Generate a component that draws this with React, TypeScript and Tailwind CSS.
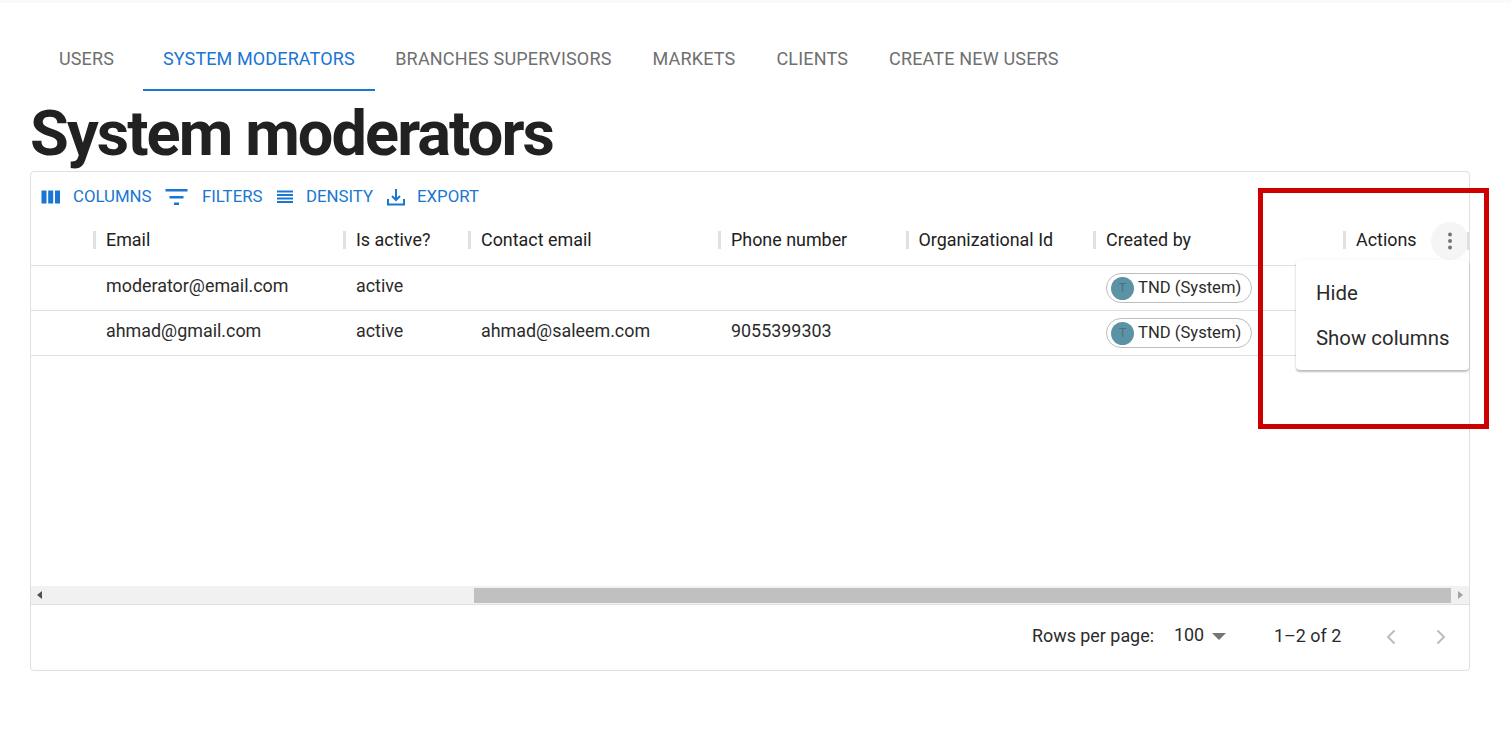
import React from 'react';
import { ChevronLeft, ChevronRight } from 'lucide-react';

const tabs = ['USERS', 'SYSTEM MODERATORS', 'BRANCHES SUPERVISORS', 'MARKETS', 'CLIENTS', 'CREATE NEW USERS'];

const columns = [
    { label: 'Email', width: 'w-[250px]' },
    { label: 'Is active?', width: 'w-[125px]' },
    { label: 'Contact email', width: 'w-[250px]' },
    { label: 'Phone number', width: 'w-[187.5px]' },
    { label: 'Organizational Id', width: 'w-[187.5px]' },
    { label: 'Created by', width: 'w-[250px]' },
];

const rows = [
    { email: 'moderator@email.com', active: 'active', contact: '', phone: '' },
    { email: 'ahmad@gmail.com', active: 'active', contact: 'ahmad@saleem.com', phone: '9055399303' },
];

const Chip = () => (
    <div className="flex h-[30px] w-[146px] items-center rounded-full border border-[#bdbdbd] pl-[4px]">
        <div className="flex h-[23px] w-[23px] items-center justify-center rounded-full bg-[#5a93a5] text-[12px] text-[#4f6f7b]">T</div>
        <span className="ml-[4px] text-[16.6px] text-[#2b2b2b]">TND (System)</span>
    </div>
);

const ToolbarButton: React.FC<{ icon: React.ReactNode; label: string; gap: string; className: string }> = ({ icon, label, gap, className }) => (
    <div className={`flex items-center ${gap} ${className}`}>
        {icon}
        <span className="text-[16.8px] text-[#1976d2]">{label}</span>
    </div>
);

const App: React.FC = () => {
    return (
        <div className="relative h-[752px] w-[1511px] overflow-hidden bg-white font-['Roboto',sans-serif]">
            <div className="h-[3px] bg-[#fafafa]" />

            {/* Tabs */}
            <div className="mt-[25px] flex h-[63px] pl-[30px]">
                {tabs.map((tab, i) => (
                    <div
                        key={tab}
                        className={`flex items-center justify-center border-b-2 text-[18px] ${i === 0 ? 'w-[113px] tracking-[0.12px]' : i === 1 ? 'px-[20px] tracking-[0.12px]' : 'px-[20.5px] tracking-[0.17px]'} ${i === 1 ? 'border-[#1976d2] text-[#1976d2]' : 'border-transparent text-[#6f6f6f]'}`}
                    >
                        {tab}
                    </div>
                ))}
            </div>

            <h1 className="ml-[30px] mt-[5px] h-[75px] text-[63px] font-bold leading-[76px] tracking-[-1.9px] text-[#212121]">System moderators</h1>

            {/* Grid */}
            <div className="relative ml-[30px] h-[500px] w-[1440px] rounded-[4px] border border-[#e0e0e0]">
                <div className="flex h-[46px] items-center pl-[10px] pt-[4px]">
                    <ToolbarButton
                        label="COLUMNS"
                        gap="gap-[12px]"
                        className="w-[124px]"
                        icon={
                            <svg width="20" height="14" viewBox="0 0 20 14" className="fill-[#1976d2]">
                                <rect x="0.5" y="0.5" width="5" height="13" />
                                <rect x="7.2" y="0.5" width="5" height="13" />
                                <rect x="14" y="0.5" width="5" height="13" />
                            </svg>
                        }
                    />
                    <ToolbarButton
                        label="FILTERS"
                        gap="gap-[13px]"
                        className="w-[112px]"
                        icon={
                            <svg width="24" height="18" viewBox="0 0 24 18" className="fill-[#1976d2]">
                                <rect x="0.5" y="1" width="22" height="2.5" />
                                <rect x="4.5" y="8" width="14" height="2.5" />
                                <rect x="9" y="14.5" width="5" height="2.5" />
                            </svg>
                        }
                    />
                    <ToolbarButton
                        label="DENSITY"
                        gap="gap-[13px]"
                        className="w-[110px]"
                        icon={
                            <svg width="16" height="14" viewBox="0 0 16 14" className="fill-[#1976d2]">
                                <rect x="0" y="0.5" width="16" height="2" />
                                <rect x="0" y="4" width="16" height="2" />
                                <rect x="0" y="7.5" width="16" height="2" />
                                <rect x="0" y="11" width="16" height="2" />
                            </svg>
                        }
                    />
                    <ToolbarButton
                        label="EXPORT"
                        gap="gap-[12px]"
                        className=""
                        icon={
                            <svg width="18" height="18" viewBox="0 0 18 18" fill="none" stroke="#1976d2" strokeWidth="2">
                                <path d="M1 11v5.5h16V11" />
                                <path d="M9 1v10" />
                                <path d="M5 8l4 4 4-4" />
                            </svg>
                        }
                    />
                </div>

                {/* Header */}
                <div className="flex h-[48px] items-center border-b border-[#e0e0e0] pb-[2px] pl-[62px] text-[17.9px] text-[#212121]">
                    {columns.map(col => (
                        <div key={col.label} className={`flex items-center ${col.width}`}>
                            <div className="mr-[10px] h-[18px] w-[3px] bg-[#e0e0e0]" />
                            {col.label}
                        </div>
                    ))}
                    <div className="flex w-[88px] items-center">
                        <div className="mr-[10px] h-[18px] w-[3px] bg-[#e0e0e0]" />
                        Actions
                    </div>
                    <div className="flex h-[38px] w-[38px] items-center justify-center rounded-full bg-[#f5f5f5]">
                        <svg width="6" height="18" viewBox="0 0 6 18" className="fill-[#757575]">
                            <circle cx="3" cy="2.5" r="2" />
                            <circle cx="3" cy="9" r="2" />
                            <circle cx="3" cy="15.5" r="2" />
                        </svg>
                    </div>
                    <div className="-ml-[2px] h-[18px] w-[2px] bg-[#e0e0e0]" />
                </div>

                {/* Rows */}
                {rows.map(row => (
                    <div key={row.email} className="flex h-[45px] items-center border-b border-[#e0e0e0] pl-[75px] text-[17.9px] text-[#2b2b2b]">
                        <div className="-mt-[3px] w-[250px]">{row.email}</div>
                        <div className="-mt-[3px] w-[125px]">{row.active}</div>
                        <div className="-mt-[3px] w-[250px]">{row.contact}</div>
                        <div className="-mt-[3px] w-[187.5px]">{row.phone}</div>
                        <div className="w-[187.5px]" />
                        <Chip />
                    </div>
                ))}

                <div className="h-[230px]" />

                {/* Scrollbar */}
                <div className="flex h-[19px] items-center border-b border-[#e0e0e0] bg-[#f1f1f1]">
                    <div className="flex w-[17px] justify-center">
                        <div className="h-0 w-0 border-y-[4px] border-r-[5px] border-y-transparent border-r-[#505050]" />
                    </div>
                    <div className="ml-[426px] h-[15px] w-[977px] bg-[#c0c0c0]" />
                    <div className="flex flex-1 justify-center">
                        <div className="h-0 w-0 border-y-[4px] border-l-[5px] border-y-transparent border-l-[#a3a3a3]" />
                    </div>
                </div>

                {/* Footer */}
                <div className="flex h-[65px] items-center pr-[16px] text-[17.9px] text-[#2b2b2b]">
                    <div className="-mt-[3px] ml-auto">Rows per page:</div>
                    <div className="ml-[20px] flex w-[100px] items-center">
                        <span className="-mt-[5px]">100</span>
                        <div className="ml-[8px] -mt-[1px] h-0 w-0 border-x-[7px] border-t-[7px] border-x-transparent border-t-[#757575]" />
                    </div>
                    <div className="-mt-[3px] w-[105px]">1–2 of 2</div>
                    <div className="-mt-[2px] flex gap-[26px]">
                        <ChevronLeft size={24} strokeWidth={2} className="text-[#bdbdbd]" />
                        <ChevronRight size={24} strokeWidth={2} className="text-[#bdbdbd]" />
                    </div>
                </div>

                {/* Column menu */}
                <div className="absolute left-[1265px] top-[88px] h-[110px] w-[173px] rounded-[4px] bg-white pl-[20px] pt-[11px] text-[20.4px] text-[#2b2b2b] shadow-[0_2px_2px_rgba(0,0,0,0.25),0_0_3px_rgba(0,0,0,0.06)]">
                    <div className="flex h-[45px] items-center">Hide</div>
                    <div className="flex h-[45px] items-center">Show columns</div>
                </div>
            </div>

            {/* Highlight box */}
            <div className="absolute left-[1258px] top-[188px] h-[241px] w-[231px] border-[5px] border-[#cc0000]" />
        </div>
    );
};

export default App;
